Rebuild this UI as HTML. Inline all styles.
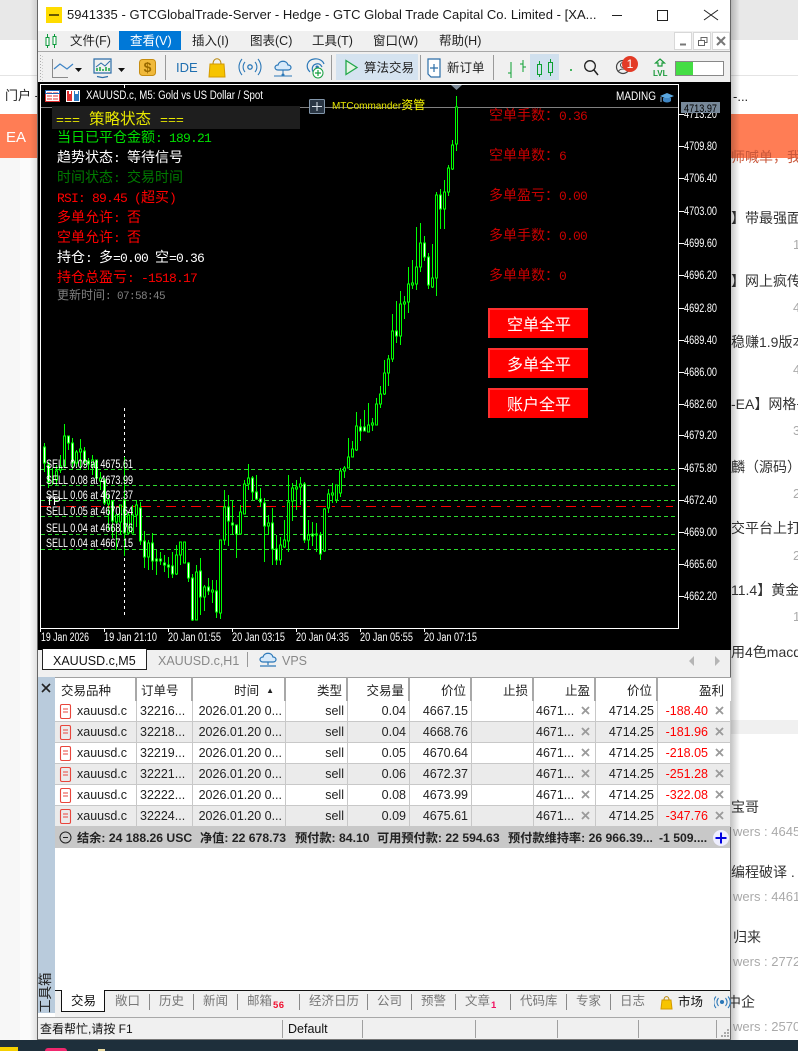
<!DOCTYPE html>
<html lang="zh"><head><meta charset="utf-8"><title>MT5</title>
<style>
html,body{margin:0;padding:0;background:#fff}
#p{position:relative;width:798px;height:1051px;overflow:hidden;background:#fff;font-family:"Liberation Sans","Noto Sans CJK SC",sans-serif;color:#222}
.a{position:absolute}
.t{position:absolute;white-space:nowrap;line-height:16px;font-size:12.5px}
.bg{color:#333;font-size:14px;left:731px}
.gr{color:#aaa;font-size:13px}
.c{font-family:"Noto Sans CJK SC","Liberation Mono",monospace;font-size:14px;left:57px;line-height:18px}
.c b,.r b{font-family:"Liberation Mono",monospace;font-weight:normal;font-size:13px;letter-spacing:-.8px}
.r{font-family:"Noto Sans CJK SC",monospace;font-size:14px;left:489px;color:#c80000;line-height:18px}
.btn{position:absolute;left:488px;width:100px;height:30px;background:#f00;border-top:2px solid #ff3030;border-left:2px solid #ff3030;box-sizing:border-box;color:#fff;font-size:16px;line-height:26px;text-align:center;font-family:"Noto Sans CJK SC",sans-serif}
.tb{color:#777;font-size:12.5px;top:993px}
.sep{position:absolute;width:1px;background:#8a8a8a}
table{position:absolute;left:55px;top:677px;width:676px;border-collapse:separate;border-spacing:0;table-layout:fixed;font-size:12.5px;color:#222}
th{height:24px;padding:0 4px;font-weight:normal;text-align:right;border-top:1px solid #a0a0a0;border-right:2px solid #a8a8a8;box-sizing:border-box;background:#fff}
td{height:21px;padding:0 3px;text-align:right;border-right:1px solid #c8c8c8;border-bottom:1px solid #c8c8c8;box-sizing:border-box;white-space:nowrap;overflow:hidden}
tr:nth-child(odd) td{background:#ebebeb}
td.l,th.l{text-align:left}
td.p{color:#f00;padding-right:22px}
.s{position:absolute;top:830px;font-size:12.2px;font-weight:bold;line-height:16px;white-space:nowrap;color:#222}
</style></head><body><div id="p">

<!-- background page -->
<div class="a" style="left:0;top:0;width:798px;height:40px;background:#e8e8e8"></div>
<div class="a" style="left:0;top:75px;width:798px;height:1px;background:#e4e4e4"></div>
<div class="a" style="left:0;top:114px;width:798px;height:44px;background:#ff7d55"></div>
<div class="a" style="left:0;top:158px;width:38px;height:882px;background:#f7f7f7"></div>
<div class="a" style="left:20px;top:158px;width:18px;height:882px;background:#fbfbfb"></div>
<div class="a" style="left:731px;top:720px;width:67px;height:14px;background:#f0f0f0"></div>
<div class="t" style="left:5px;top:88px;font-size:13px">门户 -</div>
<div class="t" style="left:6px;top:130px;font-size:15px;color:#fff">EA</div>
<div class="t" style="left:733px;top:89px;font-size:13px">-...</div>
<div class="t bg" style="top:149px;color:#c9573a">师喊单，我</div>
<div class="t bg" style="top:210px">】带最强面</div>
<div class="t gr" style="left:793px;top:237px">1</div>
<div class="t bg" style="top:273px">】网上疯传</div>
<div class="t gr" style="left:793px;top:300px">4</div>
<div class="t bg" style="top:334px">稳赚1.9版本</div>
<div class="t gr" style="left:793px;top:362px">4</div>
<div class="t bg" style="top:396px">-EA】网格+</div>
<div class="t gr" style="left:793px;top:423px">3</div>
<div class="t bg" style="top:459px">麟（源码）3</div>
<div class="t gr" style="left:793px;top:486px">2</div>
<div class="t bg" style="top:520px">交平台上打A</div>
<div class="t gr" style="left:793px;top:548px">2</div>
<div class="t bg" style="top:582px">11.4】黄金</div>
<div class="t gr" style="left:793px;top:609px">1</div>
<div class="t bg" style="top:644px">用4色macd</div>
<div class="t bg" style="top:799px">宝哥</div>
<div class="t gr" style="left:733px;top:824px">wers : 4645</div>
<div class="t bg" style="top:864px">编程破译 .</div>
<div class="t gr" style="left:733px;top:889px">wers : 4461</div>
<div class="t bg" style="top:929px;left:733px">归来</div>
<div class="t gr" style="left:733px;top:954px">wers : 2772</div>
<div class="t bg" style="top:994px;left:727px">中企</div>
<div class="t gr" style="left:733px;top:1019px">wers : 2570</div>
<div class="a" style="left:0;top:1040px;width:798px;height:11px;background:#1e2f3b"></div>
<div class="a" style="left:0;top:1047px;width:18px;height:4px;background:#f5d000"></div>
<div class="a" style="left:45px;top:1048px;width:22px;height:6px;border-radius:8px;background:#f0286e"></div>
<div class="a" style="left:98px;top:1049px;width:7px;height:2px;background:#e8d9a0"></div>
<!-- window shadow -->
<div class="a" style="left:731px;top:0;width:9px;height:1040px;background:linear-gradient(90deg,rgba(0,0,0,.22),rgba(0,0,0,0))"></div>
<div class="a" style="left:30px;top:0;width:8px;height:1040px;background:linear-gradient(270deg,rgba(0,0,0,.12),rgba(0,0,0,0))"></div>

<!-- window -->
<div class="a" style="left:37px;top:0;width:694px;height:1040px;background:#fff;border-left:1px solid #666;border-right:1px solid #666;box-sizing:border-box"></div>
<div class="a" style="left:38px;top:1039px;width:693px;height:1px;background:#777"></div>
<!-- title bar -->
<div class="a" style="left:46px;top:7px;width:16px;height:16px;background:#ffdc00"></div>
<div class="a" style="left:49px;top:14px;width:10px;height:2px;background:#6a5a00"></div>
<div class="t" style="left:67px;top:7px;font-size:13px;letter-spacing:.03px;color:#1a1a1a">5941335 - GTCGlobalTrade-Server - Hedge - GTC Global Trade Capital Co. Limited - [XA...</div>
<svg class="a" style="left:600px;top:0" width="130" height="31" fill="none" stroke="#222" stroke-width="1" shape-rendering="crispEdges"><path d="M12 15.5H22M57.5 10.5H67.5V20.5H57.5Z"/><path d="M104 10L118 20M118 10L104 20" shape-rendering="auto"/></svg>
<!-- menu -->
<div class="a" style="left:38px;top:31px;width:692px;height:20px;background:#f0f0f0"></div>
<div class="a" style="left:119px;top:31px;width:62px;height:19px;background:#0078d7"></div>
<svg class="a" style="left:44px;top:33px" width="16" height="16" fill="none" stroke="#0a9a3a" stroke-width="1" shape-rendering="crispEdges"><path d="M3.5 1V15M10.5 1V15"/><path d="M2 4.5h3v8h-3zM9 3.5h3v8h-3z" fill="#fff"/></svg>
<div class="t" style="left:70px;top:33px">文件(F)</div>
<div class="t" style="left:130px;top:33px;color:#fff">查看(V)</div>
<div class="t" style="left:192px;top:33px">插入(I)</div>
<div class="t" style="left:250px;top:33px">图表(C)</div>
<div class="t" style="left:312px;top:33px">工具(T)</div>
<div class="t" style="left:373px;top:33px">窗口(W)</div>
<div class="t" style="left:439px;top:33px">帮助(H)</div>
<svg class="a" style="left:674px;top:32px" width="57" height="18" shape-rendering="crispEdges"><path d="M.5.5h17v17h-17zM19.5.5h17v17h-17zM38.5.5h17v17h-17z" fill="#fff" stroke="#d8d8d8"/><path d="M6 12.5h6" stroke="#777" stroke-width="2"/><path d="M24.5 8.5h6v5h-6zM27 8V5.5h6v5h-2" fill="none" stroke="#666"/><path d="M43 5L51 13M51 5L43 13" stroke="#777" stroke-width="2" shape-rendering="auto"/></svg>
<!-- toolbar -->
<div class="a" style="left:38px;top:51px;width:692px;height:1px;background:#a8a8a8"></div>
<div class="a" style="left:38px;top:52px;width:692px;height:30px;background:#f0f0f0"></div>
<div class="a" style="left:336px;top:54px;width:82px;height:26px;background:#d5e3f0"></div>
<div class="a" style="left:530px;top:54px;width:29px;height:26px;background:#d0e0ee"></div>
<svg class="a" style="left:38px;top:52px" width="692" height="30" fill="none">
<path d="M2.5 3v26" stroke="#aaa" stroke-dasharray="1 2"/><path d="M4.5 4v26" stroke="#ccc" stroke-dasharray="1 2"/>
<path d="M14.5 7V25.5H30" stroke="#8a8a8a"/><path d="M16 17l6-5 7 5 6-5" stroke="#3d84c6" stroke-width="1.2"/>
<path d="M37 16h7l-3.500 4zM80 16h7l-3.500 4z" fill="#111"/>
<path d="M56 7h17v14h-17zM59 24.500l5 1h1l5-1" stroke="#2c6ea8" stroke-width="1.2"/>
<path d="M58 15l5-4 4 3 5-5" stroke="#2c6ea8"/>
<path d="M59 19v-3M62 19v-4M65 19v-2M68 19v-4M71 19v-3" stroke="#22a84a" stroke-width="1.600"/>
<rect x="101.500" y="7.500" width="16" height="16" rx="3" fill="#f0b93b" stroke="#c78d10"/>
<text x="109.500" y="20" font-size="14" text-anchor="middle" fill="#9a6a00" font-family="Liberation Sans" font-weight="bold" stroke="none">$</text>
<path d="M127.500 3v25M293.500 3v25M382.500 3v25M455.500 3v25" stroke="#9a9a9a"/>
<text x="138" y="20" font-size="13" fill="#1f6fb0" font-family="Liberation Sans" stroke="none">IDE</text>
<path d="M172 12h14l1 13h-16z" fill="#f6c400" stroke="#d49a00"/><path d="M175 12c0-7 8-7 8 0" stroke="#b8870a"/>
<circle cx="212" cy="15" r="2.200" stroke="#2c78b8" stroke-width="1.300"/>
<path d="M207 10c-2.500 3-2.500 7 0 10M217 10c2.500 3 2.500 7 0 10M204 7c-4 5-4 11 0 16M220 7c4 5 4 11 0 16" stroke="#2c78b8" stroke-width="1.100"/>
<path d="M240 18c-4 0-4-5 0-5 1-5 9-5 10 0 4 0 4 5 0 5z" stroke="#2c78b8" stroke-width="1.200" fill="#d8eafa"/>
<path d="M245 18v4M236 24h18" stroke="#2c78b8"/><circle cx="245" cy="23" r="1.500" fill="#2c78b8"/>
<path d="M272 20c-5-5-3-12 4-13 5-1 9 2 10 5M276 21c-3-3-2-8 2-9 3-1 5 1 6 3M279 18c-1-2 0-3 2-3" stroke="#2c78b8" stroke-width="1.200"/>
<circle cx="279" cy="15" r="1.500" fill="#2c78b8"/>
<circle cx="280" cy="21" r="5" fill="#fff" stroke="#18a040"/><path d="M280 18v6M277 21h6" stroke="#18a040" stroke-width="1.200"/>
<path d="M308 8.500v14l11-7z" stroke="#22a84a" stroke-width="1.300" fill="#e4f4e4"/>
<path d="M390 7h12v18h-9l-3-3z" stroke="#2c6ea8" stroke-width="1.200" fill="#fff"/><path d="M396 12v8M392 16h8" stroke="#2c6ea8" stroke-width="1.200"/>
<g stroke="#0aa030" stroke-width="1.300" shape-rendering="crispEdges"><path d="M473 10V26M470 21h3M485 8V20M482 12h3M485 15h3"/></g>
<g stroke="#0aa030" stroke-width="1" shape-rendering="crispEdges"><path d="M501.500 9V25M512.500 7V24"/><path d="M499.500 12.500h4v10h-4zM510.500 10.500h4v10h-4z" fill="#d0e0ee"/></g>
<path d="M532 18h2" stroke="#0aa030" stroke-width="1.500"/>
<circle cx="552" cy="14" r="5.300" stroke="#222" stroke-width="1.300"/><path d="M556 18l4 5" stroke="#222" stroke-width="1.500"/>
<circle cx="585" cy="15" r="6.500" stroke="#444" stroke-width="1.200"/><circle cx="585" cy="13" r="2.500" stroke="#444"/><path d="M580 20c2-4 8-4 10 0" stroke="#444"/>
<path d="M622 7l4.500 4h-2.500v3h-4v-3h-2.500z" stroke="#1a9a3a" stroke-width="1.200"/>
<text x="615" y="24" font-size="8" fill="#1a9a3a" font-family="Liberation Sans" font-weight="bold" stroke="none">LVL</text>
</svg>
<div class="a" style="left:622px;top:56px;width:16px;height:16px;border-radius:50%;background:#e33b26;color:#fff;font-size:12px;line-height:16px;text-align:center">1</div>
<div class="a" style="left:675px;top:61px;width:49px;height:15px;border:1px solid #888;box-sizing:border-box;background:#fff"><div style="width:17px;height:13px;background:#44dd44"></div></div>
<div class="t" style="left:364px;top:60px">算法交易</div>
<div class="t" style="left:447px;top:60px">新订单</div>

<!-- chart -->
<svg class="a" style="left:38px;top:82px" width="693" height="568" viewBox="38 82 693 568"><rect x="38" y="82" width="693" height="568" fill="#000"/>
<path d="M40.500 84.500H678.500V628.500H40.500Z" fill="none" stroke="#fff" shape-rendering="crispEdges"/>
<path d="M41 107.500H678" stroke="#808080" shape-rendering="crispEdges"/>
<g fill="none" stroke="#2ed82e" stroke-dasharray="4 3" shape-rendering="crispEdges">
<path d="M41 469.500H678M41 485.500H678M41 500.500H678M41 516.500H678M41 534.500H678M41 549.500H678"/></g>
<path d="M41 506.500H673" stroke="#f00" stroke-width="1" stroke-dasharray="10 6 3 6" shape-rendering="crispEdges"/>
<path d="M124.500 408V618M124.500 85V91" stroke="#fff" stroke-dasharray="3 3" shape-rendering="crispEdges"/>
<g shape-rendering="crispEdges" stroke="#0f0" stroke-width="1">
<path d="M44.500 443V472M48.500 462V488M52.500 468V485M56.500 465V485M60.500 455V473M64.500 424V465M68.500 436V450M72.500 438V470M76.500 450V468M80.500 439V470M84.500 447V466M88.500 458V470M92.500 455V475M96.500 460V480M100.500 472V490M104.500 478V505M108.500 495V530M112.500 500V538M116.500 515V550M120.500 505V535M124.500 457V556M128.500 512V535M132.500 505V530M136.500 500V527M140.500 502V545M144.500 531V568M148.500 540V570M152.500 533V570M156.500 550V575M160.500 552V565M164.500 555V572M168.500 557V578M172.500 552V578M176.500 545V575M180.500 542V565M184.500 542V563M188.500 562V582M192.500 574V621M196.500 565V620M200.500 558V615M204.500 585V611M208.500 578V595M212.500 580V603M216.500 580V618M220.500 540V619M224.500 490V545M228.500 495V546M232.500 500V535M236.500 525V558M240.500 505V534M244.500 480V514M248.500 464V490M252.500 476V500M256.500 475V500M260.500 488V507M264.500 498V562M268.500 515V535M272.500 508V565M276.500 535V565M280.500 537V565M284.500 520V548M288.500 475V552M292.500 483V521M296.500 480V510M300.500 477V505M304.500 482V543M308.500 520V550M312.500 522V546M316.500 523V552M320.500 532V560M324.500 508V552M328.500 489V513M332.500 483V503M336.500 485V503M340.500 468V497M344.500 466V478M348.500 438V468M352.500 441V457M356.500 412V451M360.500 419V441M364.500 410V431M368.500 403V432M372.500 418V431M376.500 398V425M380.500 386V408M384.500 360V395M388.500 355V386M392.500 314V362M396.500 301V343M400.500 291V345M404.500 296V319M408.500 267V313M412.500 260V289M416.500 227V290M420.500 223V272M424.500 236V261M428.500 253V289M432.500 244V288M436.500 192V296M440.500 189V229M444.500 180V229M448.500 165V196M452.500 140V170M456.500 96V151"/>
<path fill="#000" d="M47.500 470h2v10h-2zM55.500 471h2v9h-2zM59.500 466h2v4h-2zM63.500 436h2v30h-2zM75.500 452h2v11h-2zM79.500 449h2v3h-2zM91.500 460h2v5h-2zM99.500 478h2v3h-2zM107.500 500h2v4h-2zM115.500 515h2v7h-2zM119.500 505h2v17h-2zM127.500 515h2v18h-2zM131.500 515h2v18h-2zM135.500 505h2v10h-2zM147.500 543h2v14h-2zM175.500 555h2v19h-2zM179.500 542h2v13h-2zM183.500 542h2v21h-2zM195.500 572h2v48h-2zM203.500 587h2v10h-2zM211.500 590h2v2h-2zM219.500 540h2v73h-2zM223.500 507h2v33h-2zM239.500 512h2v22h-2zM243.500 484h2v30h-2zM247.500 478h2v6h-2zM267.500 523h2v3h-2zM279.500 545h2v15h-2zM283.500 540h2v7h-2zM287.500 502h2v39h-2zM291.500 488h2v13h-2zM295.500 487h2v2h-2zM299.500 484h2v3h-2zM307.500 535h2v5h-2zM323.500 509h2v42h-2zM327.500 494h2v14h-2zM331.500 493h2v2h-2zM335.500 485h2v15h-2zM339.500 471h2v22h-2zM343.500 468h2v3h-2zM347.500 457h2v11h-2zM351.500 449h2v8h-2zM355.500 426h2v24h-2zM367.500 425h2v7h-2zM371.500 423h2v2h-2zM375.500 404h2v21h-2zM379.500 394h2v10h-2zM383.500 373h2v21h-2zM387.500 359h2v14h-2zM391.500 331h2v28h-2zM399.500 304h2v32h-2zM403.500 302h2v2h-2zM407.500 284h2v18h-2zM411.500 283h2v2h-2zM415.500 267h2v17h-2zM419.500 243h2v24h-2zM431.500 278h2v9h-2zM435.500 195h2v83h-2zM443.500 192h2v17h-2zM447.500 168h2v24h-2zM451.500 145h2v24h-2zM455.500 107h2v37h-2z"/>
<path fill="#fff" d="M43.500 447h2v16h-2zM47.500 465h2v17h-2zM67.500 436h2v7h-2zM71.500 443h2v20h-2zM83.500 451h2v11h-2zM87.500 461h2v3h-2zM95.500 460h2v18h-2zM103.500 480h2v23h-2zM111.500 501h2v20h-2zM123.500 500h2v33h-2zM139.500 508h2v33h-2zM143.500 541h2v16h-2zM151.500 543h2v18h-2zM155.500 559h2v2h-2zM159.500 559h2v2h-2zM163.500 563h2v2h-2zM167.500 565h2v2h-2zM171.500 566h2v8h-2zM187.500 563h2v15h-2zM191.500 578h2v42h-2zM199.500 571h2v26h-2zM207.500 587h2v4h-2zM215.500 591h2v21h-2zM227.500 507h2v14h-2zM231.500 523h2v2h-2zM235.500 525h2v9h-2zM251.500 478h2v14h-2zM255.500 492h2v7h-2zM259.500 499h2v3h-2zM263.500 503h2v23h-2zM271.500 523h2v26h-2zM275.500 549h2v11h-2zM303.500 484h2v56h-2zM311.500 534h2v2h-2zM315.500 534h2v1h-2zM319.500 535h2v19h-2zM359.500 427h2v4h-2zM363.500 427h2v4h-2zM395.500 331h2v5h-2zM423.500 243h2v14h-2zM427.500 257h2v28h-2zM439.500 195h2v14h-2z"/>
</g>
<g fill="#fff" font-family="Liberation Sans" font-size="11.500">
<text x="46" y="468" textLength="87" lengthAdjust="spacingAndGlyphs">SELL 0.09 at 4675.61</text>
<text x="46" y="484" textLength="87" lengthAdjust="spacingAndGlyphs">SELL 0.08 at 4673.99</text>
<text x="46" y="499" textLength="87" lengthAdjust="spacingAndGlyphs">SELL 0.06 at 4672.37</text>
<text x="46" y="505">TP</text>
<text x="46" y="515" textLength="87" lengthAdjust="spacingAndGlyphs">SELL 0.05 at 4670.64</text>
<text x="46" y="532" textLength="87" lengthAdjust="spacingAndGlyphs">SELL 0.04 at 4668.76</text>
<text x="46" y="547" textLength="87" lengthAdjust="spacingAndGlyphs">SELL 0.04 at 4667.15</text>
<text x="86" y="99" textLength="177" lengthAdjust="spacingAndGlyphs">XAUUSD.c, M5:  Gold vs US Dollar / Spot</text>
<text x="616" y="100" textLength="40" lengthAdjust="spacingAndGlyphs">MADING</text>
</g>
<!-- axis -->
<g stroke="#fff" shape-rendering="crispEdges"><path d="M679 114.500h5M679 146.500h5M679 178.500h5M679 211.500h5M679 243.500h5M679 275.500h5M679 308.500h5M679 340.500h5M679 372.500h5M679 404.500h5M679 435.500h5M679 468.500h5M679 500.500h5M679 532.500h5M679 564.500h5M679 596.500h5"/><path d="M40.500 629v3M104.500 629v3M168.500 629v3M232.500 629v3M296.500 629v3M360.500 629v3M424.500 629v3"/></g>
<g fill="#fff" font-family="Liberation Sans" font-size="11.500">
<text x="684" y="118" textLength="33" lengthAdjust="spacingAndGlyphs">4713.20</text><text x="684" y="150" textLength="33" lengthAdjust="spacingAndGlyphs">4709.80</text><text x="684" y="182" textLength="33" lengthAdjust="spacingAndGlyphs">4706.40</text><text x="684" y="215" textLength="33" lengthAdjust="spacingAndGlyphs">4703.00</text><text x="684" y="247" textLength="33" lengthAdjust="spacingAndGlyphs">4699.60</text><text x="684" y="279" textLength="33" lengthAdjust="spacingAndGlyphs">4696.20</text><text x="684" y="312" textLength="33" lengthAdjust="spacingAndGlyphs">4692.80</text><text x="684" y="344" textLength="33" lengthAdjust="spacingAndGlyphs">4689.40</text><text x="684" y="376" textLength="33" lengthAdjust="spacingAndGlyphs">4686.00</text><text x="684" y="408" textLength="33" lengthAdjust="spacingAndGlyphs">4682.60</text><text x="684" y="439" textLength="33" lengthAdjust="spacingAndGlyphs">4679.20</text><text x="684" y="472" textLength="33" lengthAdjust="spacingAndGlyphs">4675.80</text><text x="684" y="504" textLength="33" lengthAdjust="spacingAndGlyphs">4672.40</text><text x="684" y="536" textLength="33" lengthAdjust="spacingAndGlyphs">4669.00</text><text x="684" y="568" textLength="33" lengthAdjust="spacingAndGlyphs">4665.60</text><text x="684" y="600" textLength="33" lengthAdjust="spacingAndGlyphs">4662.20</text>
<text x="41" y="641" textLength="48" lengthAdjust="spacingAndGlyphs">19 Jan 2026</text><text x="104" y="641" textLength="53" lengthAdjust="spacingAndGlyphs">19 Jan 21:10</text><text x="168" y="641" textLength="53" lengthAdjust="spacingAndGlyphs">20 Jan 01:55</text><text x="232" y="641" textLength="53" lengthAdjust="spacingAndGlyphs">20 Jan 03:15</text><text x="296" y="641" textLength="53" lengthAdjust="spacingAndGlyphs">20 Jan 04:35</text><text x="360" y="641" textLength="53" lengthAdjust="spacingAndGlyphs">20 Jan 05:55</text><text x="424" y="641" textLength="53" lengthAdjust="spacingAndGlyphs">20 Jan 07:15</text></g>
<rect x="681" y="102" width="39" height="11" fill="#778899"/>
<text x="684" y="112" font-family="Liberation Sans" font-size="11" fill="#000" textLength="33" lengthAdjust="spacingAndGlyphs">4713.97</text>
<!-- header icons -->
<path d="M45.500 90.500h14v11h-14z" fill="#fff" stroke="#e03030"/><path d="M47 93h5M47 96h5M47 99h5M53 93h5M53 96h5M53 99h5" stroke="#e03030" shape-rendering="crispEdges"/><path d="M45.500 90.500h14v3h-14z" fill="none" stroke="#2060b0"/>
<rect x="66" y="90" width="14" height="12" fill="#fff"/><path d="M67 91h5v10h-5z" fill="#e03030"/><path d="M74 91h5v10h-5z" fill="#2a7ac0"/><path d="M69 91h2v3h-2zM75 91h3v3h-3z" fill="#fff"/>
<path d="M451 85h11l-5.500 5z" fill="#7a8896"/>
<path d="M660 96l7-3 7 3-7 3z" fill="#5aa7e0"/><path d="M663 98v3c2 2 6 2 8 0v-3" fill="#3f86c4"/><path d="M661 97v5" stroke="#9bd" />
<rect x="309.500" y="99.500" width="15" height="14" rx="1" fill="#2a3644" stroke="#8296aa"/><path d="M312 106.500h10M317 102v9" stroke="#dfe6ee" shape-rendering="crispEdges"/>
</svg>
<div class="t" style="left:332px;top:97px;font-size:12px;color:#ffff00"><span style="font-size:10px;letter-spacing:-.02px;color:#e6e600">MTCommander</span>资管</div>
<!-- info panel -->
<div class="a" style="left:52px;top:106px;width:248px;height:23px;background:#1e1e1e"></div>
<div class="t c" style="left:56px;top:109px;color:#e8e800;font-size:15.500px"><span style="font-family:'Liberation Mono';font-size:13.300px">===</span><span style="margin-left:9px">策略状态</span><span style="font-family:'Liberation Mono';font-size:13.300px;margin-left:9px">===</span></div>
<div class="t c" style="top:128px;color:#00e000">当日已平仓金额<b>: 189.21</b></div>
<div class="t c" style="top:148px;color:#fff">趋势状态<b>: </b>等待信号</div>
<div class="t c" style="top:168px;color:#007a00">时间状态<b>: </b>交易时间</div>
<div class="t c" style="top:188px;color:#f00"><b>RSI: 89.45 (</b>超买<b>)</b></div>
<div class="t c" style="top:208px;color:#f00">多单允许<b>: </b>否</div>
<div class="t c" style="top:228px;color:#f00">空单允许<b>: </b>否</div>
<div class="t c" style="top:248px;color:#fff">持仓<b>: </b>多<b>=0.00 </b>空<b>=0.36</b></div>
<div class="t c" style="top:268px;color:#f00">持仓总盈亏<b>: -1518.17</b></div>
<div class="t c" style="top:286px;color:#808080;font-size:12px">更新时间<b style="font-size:11px;letter-spacing:-.6px">: 07:58:45</b></div>
<div class="t r" style="top:106px">空单手数：<b>0.36</b></div>
<div class="t r" style="top:146px">空单单数：<b>6</b></div>
<div class="t r" style="top:186px">多单盈亏：<b>0.00</b></div>
<div class="t r" style="top:226px">多单手数：<b>0.00</b></div>
<div class="t r" style="top:266px">多单单数：<b>0</b></div>
<div class="btn" style="top:308px">空单全平</div>
<div class="btn" style="top:348px">多单全平</div>
<div class="btn" style="top:388px">账户全平</div>

<!-- chart tabs -->
<div class="a" style="left:38px;top:650px;width:692px;height:27px;background:#f0f0f0"></div>
<div class="a" style="left:42px;top:649px;width:105px;height:21px;background:#fff;border:1px solid #222;border-top:0;box-sizing:border-box"></div>
<div class="t" style="left:53px;top:653px;color:#111">XAUUSD.c,M5</div>
<div class="t" style="left:158px;top:653px;color:#888">XAUUSD.c,H1</div>
<div class="a" style="left:247px;top:652px;width:1px;height:15px;background:#999"></div>
<svg class="a" style="left:259px;top:652px" width="18" height="16" fill="none" stroke="#2c78b8" stroke-width="1.200"><path d="M4 10c-4 0-4-5 0-5 1-5 9-5 10 0 4 0 4 5 0 5z" fill="#d8eafa"/><path d="M9 10v3M1 14h16"/></svg>
<div class="t" style="left:282px;top:653px;color:#888">VPS</div>
<svg class="a" style="left:688px;top:655px" width="36" height="12" fill="#b5b5b5"><path d="M6 1v10l-5-5zM27 1v10l5-5z"/></svg>

<!-- toolbox strip -->
<div class="a" style="left:38px;top:677px;width:17px;height:336px;background:#b9cbdc"></div>
<svg class="a" style="left:40px;top:682px" width="12" height="12" stroke="#222" stroke-width="1.600"><path d="M2 2L10 10M10 2L2 10"/></svg>
<div class="t" style="left:26px;top:985px;width:40px;font-size:13.500px;transform:rotate(-90deg);color:#222">工具箱</div>

<!-- grid -->
<table><colgroup><col style="width:82px"><col style="width:56px"><col style="width:93px"><col style="width:62px"><col style="width:62px"><col style="width:62px"><col style="width:62px"><col style="width:62px"><col style="width:62px"><col style="width:73px"></colgroup>
<tr><th class="l" style="padding-left:6px">交易品种</th><th class="l">订单号</th><th style="padding-right:10px">时间 &nbsp;<span style="font-size:8px;vertical-align:2px">▲</span></th><th>类型</th><th>交易量</th><th>价位</th><th>止损</th><th>止盈</th><th>价位</th><th style="border-right:0;padding-right:7px">盈利</th></tr>
<tr><td class="l" style="padding-left:22px">xauusd.c</td><td class="l">32216...</td><td>2026.01.20 0...</td><td>sell</td><td>0.04</td><td>4667.15</td><td></td><td class="l" style="padding-left:2px">4671...</td><td>4714.25</td><td class="p">-188.40</td></tr>
<tr><td class="l" style="padding-left:22px">xauusd.c</td><td class="l">32218...</td><td>2026.01.20 0...</td><td>sell</td><td>0.04</td><td>4668.76</td><td></td><td class="l" style="padding-left:2px">4671...</td><td>4714.25</td><td class="p">-181.96</td></tr>
<tr><td class="l" style="padding-left:22px">xauusd.c</td><td class="l">32219...</td><td>2026.01.20 0...</td><td>sell</td><td>0.05</td><td>4670.64</td><td></td><td class="l" style="padding-left:2px">4671...</td><td>4714.25</td><td class="p">-218.05</td></tr>
<tr><td class="l" style="padding-left:22px">xauusd.c</td><td class="l">32221...</td><td>2026.01.20 0...</td><td>sell</td><td>0.06</td><td>4672.37</td><td></td><td class="l" style="padding-left:2px">4671...</td><td>4714.25</td><td class="p">-251.28</td></tr>
<tr><td class="l" style="padding-left:22px">xauusd.c</td><td class="l">32222...</td><td>2026.01.20 0...</td><td>sell</td><td>0.08</td><td>4673.99</td><td></td><td class="l" style="padding-left:2px">4671...</td><td>4714.25</td><td class="p">-322.08</td></tr>
<tr><td class="l" style="padding-left:22px">xauusd.c</td><td class="l">32224...</td><td>2026.01.20 0...</td><td>sell</td><td>0.09</td><td>4675.61</td><td></td><td class="l" style="padding-left:2px">4671...</td><td>4714.25</td><td class="p">-347.76</td></tr>
</table>
<svg class="a" style="left:55px;top:701px" width="676" height="127" fill="none">
<g stroke="#e8463c" stroke-width="1.100"><rect x="5.500" y="3.500" width="10" height="14" rx="1.500"/><rect x="5.500" y="24.500" width="10" height="14" rx="1.500"/><rect x="5.500" y="45.500" width="10" height="14" rx="1.500"/><rect x="5.500" y="66.500" width="10" height="14" rx="1.500"/><rect x="5.500" y="87.500" width="10" height="14" rx="1.500"/><rect x="5.500" y="108.500" width="10" height="14" rx="1.500"/>
<path d="M8 8h5M8 11h5M8 29h5M8 32h5M8 50h5M8 53h5M8 71h5M8 74h5M8 92h5M8 95h5M8 113h5M8 116h5"/></g>
<g stroke="#9a9a9a" stroke-width="1.800"><path d="M527 6l7 7M534 6l-7 7M527 27l7 7M534 27l-7 7M527 48l7 7M534 48l-7 7M527 69l7 7M534 69l-7 7M527 90l7 7M534 90l-7 7M527 111l7 7M534 111l-7 7M661 6l7 7M668 6l-7 7M661 27l7 7M668 27l-7 7M661 48l7 7M668 48l-7 7M661 69l7 7M668 69l-7 7M661 90l7 7M668 90l-7 7M661 111l7 7M668 111l-7 7"/></g></svg>
<!-- summary -->
<div class="a" style="left:55px;top:827px;width:675px;height:21px;background:#c8c8c8"></div>
<svg class="a" style="left:58px;top:830px" width="16" height="16" fill="none" stroke="#222"><circle cx="7.500" cy="7.500" r="5.500"/><path d="M5 7.500h5"/></svg>
<div class="s" style="left:77px">结余: 24 188.26 USC</div>
<div class="s" style="left:200px">净值: 22 678.73</div>
<div class="s" style="left:295px">预付款: 84.10</div>
<div class="s" style="left:377px">可用预付款: 22 594.63</div>
<div class="s" style="left:508px">预付款维持率: 26 966.39...</div>
<div class="s" style="left:659px">-1 509....</div>
<svg class="a" style="left:711px;top:828px" width="20" height="20"><circle cx="10" cy="10" r="8" fill="#eef"/><path d="M10 4.500v11M4.500 10h11" stroke="#0000e0" stroke-width="2"/></svg>

<!-- bottom tabs -->
<div class="a" style="left:55px;top:990px;width:675px;height:27px;background:#f0f0f0;border-top:1px solid #111;box-sizing:border-box"></div>
<div class="a" style="left:61px;top:990px;width:44px;height:22px;background:#fff;border:1px solid #111;border-top:0;box-sizing:border-box"></div>
<div class="t" style="left:71px;top:993px;color:#111">交易</div>
<div class="t tb" style="left:115px">敞口</div><div class="sep" style="left:149px;top:994px;height:16px"></div>
<div class="t tb" style="left:159px">历史</div><div class="sep" style="left:193px;top:994px;height:16px"></div>
<div class="t tb" style="left:203px">新闻</div><div class="sep" style="left:237px;top:994px;height:16px"></div>
<div class="t tb" style="left:247px">邮箱</div><div class="t" style="left:273px;top:998px;font-size:9.500px;font-weight:bold;color:#f01030;letter-spacing:.5px">56</div><div class="sep" style="left:299px;top:994px;height:16px"></div>
<div class="t tb" style="left:309px">经济日历</div><div class="sep" style="left:367px;top:994px;height:16px"></div>
<div class="t tb" style="left:377px">公司</div><div class="sep" style="left:411px;top:994px;height:16px"></div>
<div class="t tb" style="left:421px">预警</div><div class="sep" style="left:455px;top:994px;height:16px"></div>
<div class="t tb" style="left:465px">文章</div><div class="t" style="left:491px;top:998px;font-size:9.500px;font-weight:bold;color:#f01060">1</div><div class="sep" style="left:510px;top:994px;height:16px"></div>
<div class="t tb" style="left:520px">代码库</div><div class="sep" style="left:566px;top:994px;height:16px"></div>
<div class="t tb" style="left:576px">专家</div><div class="sep" style="left:610px;top:994px;height:16px"></div>
<div class="t tb" style="left:620px">日志</div>
<svg class="a" style="left:660px;top:995px" width="14" height="15" fill="none"><path d="M2 5h9l1 9H1z" fill="#f6c400" stroke="#d49a00"/><path d="M4 5c0-4.500 5-4.500 5 0" stroke="#b8870a"/></svg>
<div class="t" style="left:678px;top:994px;color:#111">市场</div>
<svg class="a" style="left:714px;top:995px" width="17" height="15" fill="none" stroke="#2c78b8" stroke-width="1.100"><circle cx="8" cy="7" r="1.500" fill="#2c78b8"/><path d="M4.500 3c-2 2.500-2 5.500 0 8M11.500 3c2 2.500 2 5.500 0 8M2 1.500c-3 3.500-3 8 0 11.500M14 1.500c3 3.500 3 8 0 11.500"/></svg>

<!-- status bar -->
<div class="a" style="left:38px;top:1017px;width:692px;height:1px;background:#a8a8a8"></div>
<div class="a" style="left:38px;top:1018px;width:692px;height:21px;background:#f0f0f0"></div>
<div class="t" style="left:40px;top:1021px;color:#111;font-size:12px">查看帮忙,请按 F1</div>
<div class="t" style="left:288px;top:1021px;color:#111">Default</div>
<div class="sep" style="left:282px;top:1020px;height:18px;background:#a0a0a0"></div>
<div class="sep" style="left:362px;top:1020px;height:18px;background:#a0a0a0"></div>
<div class="sep" style="left:475px;top:1020px;height:18px;background:#a0a0a0"></div>
<div class="sep" style="left:557px;top:1020px;height:18px;background:#a0a0a0"></div>
<div class="sep" style="left:638px;top:1020px;height:18px;background:#a0a0a0"></div>
<div class="sep" style="left:716px;top:1020px;height:18px;background:#a0a0a0"></div>
<svg class="a" style="left:720px;top:1028px" width="10" height="10" fill="#aaa"><path d="M7 1h2v2H7zM4 4h2v2H4zM7 4h2v2H7zM1 7h2v2H1zM4 7h2v2H4zM7 7h2v2H7z"/></svg>
</div></body></html>
